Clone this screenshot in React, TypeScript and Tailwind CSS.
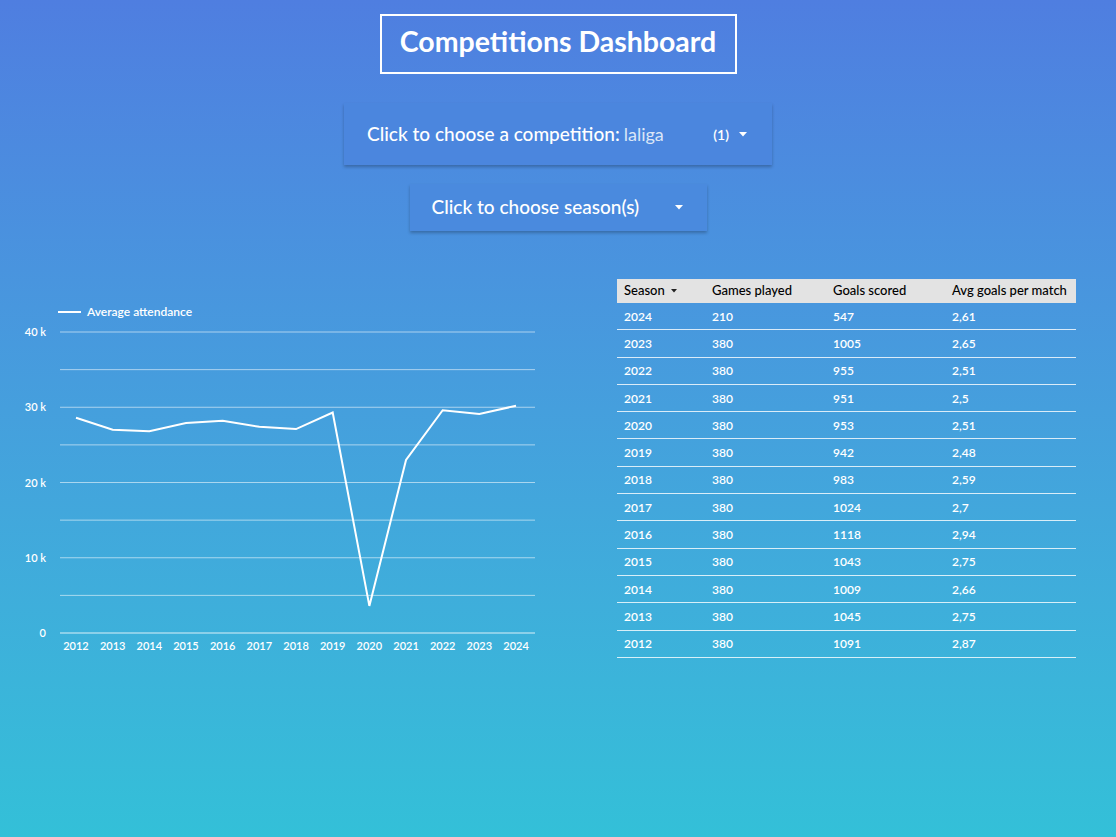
import React from "react";

const data: [number, number][] = [
  [2012, 28.6], [2013, 27.0], [2014, 26.8], [2015, 27.9], [2016, 28.2], [2017, 27.4],
  [2018, 27.1], [2019, 29.3], [2020, 3.6], [2021, 23.0], [2022, 29.6], [2023, 29.1], [2024, 30.2],
];

const rows: [string, string, string, string][] = [
  ["2024", "210", "547", "2,61"],
  ["2023", "380", "1005", "2,65"],
  ["2022", "380", "955", "2,51"],
  ["2021", "380", "951", "2,5"],
  ["2020", "380", "953", "2,51"],
  ["2019", "380", "942", "2,48"],
  ["2018", "380", "983", "2,59"],
  ["2017", "380", "1024", "2,7"],
  ["2016", "380", "1118", "2,94"],
  ["2015", "380", "1043", "2,75"],
  ["2014", "380", "1009", "2,66"],
  ["2013", "380", "1045", "2,75"],
  ["2012", "380", "1091", "2,87"],
];

const x0 = 76;
const dx = 36.67;
const yOf = (v: number) => 633 - v * 7.525;

function Caret() {
  return (
    <svg width="8" height="5" viewBox="0 0 8 5" className="shrink-0">
      <path d="M0 0 L8 0 L4 4.5 Z" fill="white" />
    </svg>
  );
}

function Chart() {
  const pts = data.map(([, v], i) => `${x0 + i * dx},${yOf(v)}`).join(" ");
  const grid = [0, 5, 10, 15, 20, 25, 30, 35, 40];
  return (
    <svg width="560" height="380" viewBox="0 279 560 380" style={{ fontFamily: "Lato, sans-serif" }}>
      <line x1="58" y1="312" x2="81" y2="312" stroke="white" strokeWidth="2" />
      <text x="87" y="316" fill="white" fontSize="12" fontWeight="600">Average attendance</text>
      {grid.map((g) => (
        <line key={g} x1="60" x2="535" y1={yOf(g)} y2={yOf(g)} stroke="rgba(255,255,255,0.55)" strokeWidth={g === 0 ? 1.5 : 1} />
      ))}
      {[0, 10, 20, 30, 40].map((g) => (
        <text key={g} x="46" y={yOf(g) + 4} textAnchor="end" fill="white" fontSize="11" fontWeight="600">
          {g === 0 ? "0" : `${g} k`}
        </text>
      ))}
      {data.map(([yr], i) => (
        <text key={yr} x={x0 + i * dx} y="650" textAnchor="middle" fill="white" fontSize="11" fontWeight="600">
          {yr}
        </text>
      ))}
      <polyline points={pts} fill="none" stroke="white" strokeWidth="2" strokeLinejoin="miter" />
    </svg>
  );
}

export default function App() {
  return (
    <div
      className="w-full min-h-screen h-[837px] bg-gradient-to-b from-[#4f7ee0] to-[#33c0d8] flex flex-col items-center text-white overflow-hidden"
      style={{ fontFamily: "Lato, 'Noto Sans', sans-serif" }}
    >
      <div className="mt-[14px] w-[357px] h-[60px] border-2 border-white flex items-center justify-center pb-[6px]">
        <span className="text-[28.5px] font-bold leading-none">Competitions Dashboard</span>
      </div>

      <div className="mt-[29px] w-[428px] h-[62px] bg-[#4b86de] shadow-[0_2px_3px_rgba(0,0,0,0.25)] flex items-center pl-[23px] pr-[25px]">
        <span className="text-[19px] font-medium">Click to choose a competition:</span>
        <span className="text-[18px] text-[#dbe6f7] font-normal ml-[4px]">laliga</span>
        <span className="ml-auto text-[14px] font-semibold mr-[10px]">(1)</span>
        <Caret />
      </div>

      <div className="mt-[19px] w-[297px] h-[47px] bg-[#4a8ade] shadow-[0_2px_3px_rgba(0,0,0,0.25)] flex items-center pl-[22px] pr-[24px]">
        <span className="text-[19px] font-medium">Click to choose season(s)</span>
        <span className="ml-auto"><Caret /></span>
      </div>

      <div className="mt-[48px] w-full flex items-start">
        <Chart />
        <div className="ml-[57px] w-[459px]">
          <div className="h-[24px] bg-[#e3e3e3] text-black text-[13px] font-medium flex items-center">
            <div className="w-[95px] pl-[7px] flex items-center gap-[6px]">Season <svg width="6" height="4" viewBox="0 0 6 4"><path d="M0 0 L6 0 L3 3.5 Z" fill="#222" /></svg></div>
            <div className="w-[121px]">Games played</div>
            <div className="w-[119px]">Goals scored</div>
            <div className="flex-1">Avg goals per match</div>
          </div>
          {rows.map((r) => (
            <div key={r[0]} className="h-[27.3px] pt-[1px] border-b border-[rgba(255,255,255,0.8)] text-[12px] font-semibold flex items-center">
              <div className="w-[95px] pl-[7px]">{r[0]}</div>
              <div className="w-[121px]">{r[1]}</div>
              <div className="w-[119px]">{r[2]}</div>
              <div className="flex-1">{r[3]}</div>
            </div>
          ))}
        </div>
      </div>
    </div>
  );
}
